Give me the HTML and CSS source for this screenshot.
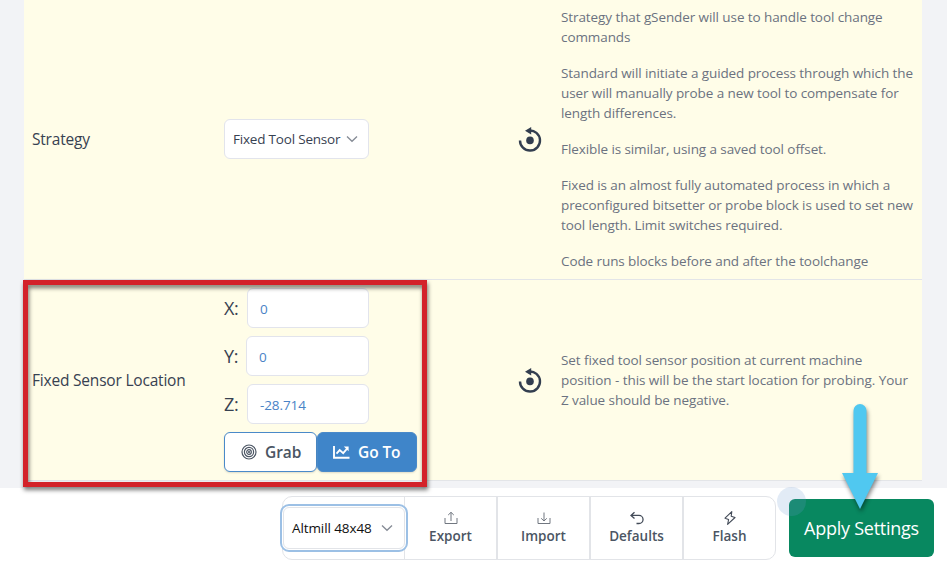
FILE: index.html
```html
<!DOCTYPE html>
<html lang="en">
<head>
<meta charset="utf-8">
<title>Tool change settings</title>
<link rel="stylesheet" href="styles.css">
</head>
<body>
<svg class="sprite" aria-hidden="true">
  <symbol id="reset" viewBox="0 0 24 24"><path d="M11 3.6A10 10 0 1 1 2 13.4" fill="none" stroke="currentColor" stroke-width="2.4"/><path d="M13.2 0v7.6L7 3.8z" fill="currentColor"/><circle cx="12" cy="13.4" r="3.8" fill="currentColor"/></symbol>
  <symbol id="chevron" viewBox="0 0 12 8"><path d="M1 1.5l5 4.8 5-4.8" fill="none" stroke="currentColor" stroke-width="1.3"/></symbol>
</svg>
<main class="panel">
  <section class="row strategy">
    <div class="label">Strategy</div>
    <div class="control"><div class="select"><span>Fixed Tool Sensor</span><svg class="chev"><use href="#chevron"/></svg></div></div>
    <svg class="reset"><use href="#reset"/></svg>
    <div class="desc">
      <p>Strategy that gSender will use to handle tool change<br>commands</p>
      <p>Standard will initiate a guided process through which the<br>user will manually probe a new tool to compensate for<br>length differences.</p>
      <p>Flexible is similar, using a saved tool offset.</p>
      <p>Fixed is an almost fully automated process in which a<br>preconfigured bitsetter or probe block is used to set new<br>tool length. Limit switches required.</p>
      <p>Code runs blocks before and after the toolchange</p>
    </div>
  </section>
  <section class="row location">
    <div class="label wide">Fixed Sensor Location</div>
    <div class="control stack">
      <div class="axis"><span>X:</span><div class="input">0</div></div>
      <div class="axis"><span>Y:</span><div class="input y">0</div></div>
      <div class="axis"><span>Z:</span><div class="input">-28.714</div></div>
      <div class="buttons">
        <div class="btn grab"><svg width="16" height="16" viewBox="0 0 16 16" fill="none" stroke="currentColor" stroke-width="1.2"><circle cx="8" cy="8" r="7"/><circle cx="8" cy="8" r="4.6"/><circle cx="8" cy="8" r="2.3"/><circle cx="8" cy="8" r=".5"/></svg><span>Grab</span></div>
        <div class="btn goto"><svg width="17" height="14" viewBox="0 0 17 14" fill="none" stroke="currentColor" stroke-width="1.9"><path d="M1 1v11.8h15.5M3.5 8.6l3.2-3.5 3.5 3 4-4.6"/><path d="M10.8 1.5H15.6V6.3z" fill="currentColor" stroke="none"/></svg><span>Go To</span></div>
      </div>
    </div>
    <svg class="reset"><use href="#reset"/></svg>
    <div class="desc">
      <p>Set fixed tool sensor position at current machine<br><span class="spread">position - this will be the start location for probing. Your</span><br>Z value should be negative.</p>
    </div>
  </section>
</main>
<footer class="footer">
  <div class="group">
    <div class="profile"><div class="profile-in"><span>Altmill 48x48</span><svg class="chev"><use href="#chevron"/></svg></div></div>
    <div class="action export"><svg width="14" height="14" viewBox="0 0 14 14" fill="none" stroke="currentColor"><path d="M1 7v5.5h12V7M7 10V1.5M4.2 4L7 1.3 9.8 4"/></svg><span>Export</span></div>
    <div class="action"><svg width="14" height="14" viewBox="0 0 14 14" fill="none" stroke="currentColor"><path d="M1 7v5.5h12V7M7 1.5V10M4.2 7.3L7 10l2.8-2.7"/></svg><span>Import</span></div>
    <div class="action"><svg class="dark" width="14" height="14" viewBox="0 0 14 14" fill="none" stroke="currentColor" stroke-width="1.3"><path d="M4.5 1.2L1 4.4l3.5 3.2M1 4.4h8a4 4 0 0 1 0 8.1H6.5"/></svg><span>Defaults</span></div>
    <div class="action"><svg class="dark" width="14" height="14" viewBox="0 0 14 14" fill="none" stroke="currentColor" stroke-width="1.1" stroke-linejoin="round"><path d="M8.8 .6L2 7.2l3.6 1.3L4.6 13.4 12 6.5 8.2 5.2z"/></svg><span>Flash</span></div>
  </div>
  <div class="apply"><span>Apply Settings</span></div>
</footer>
<div class="highlight"></div>
<div class="halo"></div>
<svg class="arrow" width="50" height="120" viewBox="0 0 50 120"><path d="M18.5 16.5a6.5 6.5 0 0 1 13 0V79H43L25 115 7 79h11.5z" fill="#50c8f0"/></svg>
</body>
</html>
```
FILE: styles.css
```css
* { box-sizing: border-box; }
body { margin: 0; width: 947px; height: 568px; overflow: hidden; background: #f2f3f6; font-family: "Open Sans", "Noto Sans", sans-serif; color: #374151; }
.sprite { position: absolute; width: 0; height: 0; }
.panel { width: 898px; height: 488px; margin-left: 24px; }
.row { display: grid; grid-template-columns: 192px 295px 42px 1fr; align-items: center; padding-left: 8px; background: #fffde8; border-bottom: 1px solid #e3e5e8; white-space: nowrap; }
.strategy { height: 280px; padding-bottom: 2px; }
.location { height: 201px; }
.label { font-size: 15.5px; letter-spacing: -.2px; }
.select { width: 145px; height: 40px; display: flex; align-items: center; justify-content: space-between; padding: 0 10px 0 8px; background: #fff; border: 1px solid #e2e4ec; border-radius: 6px; font-size: 13.5px; letter-spacing: -.2px; }
.chev { width: 12px; height: 8px; color: #858b95; flex: none; }
.reset { width: 24px; height: 26px; margin-left: -1px; color: #333e4f; }
.desc { font-size: 13.5px; line-height: 20px; letter-spacing: -.09px; color: #6b7280; }
.desc p { margin: 0 0 16px; }
.desc p:last-child { margin: 0; }
.spread { letter-spacing: -.05px; }
.stack { display: flex; flex-direction: column; gap: 8px; }
.axis { height: 40px; display: flex; align-items: center; justify-content: space-between; width: 145px; font-size: 18px; letter-spacing: -.4px; }
.input { width: 122px; height: 40px; line-height: 40px; padding-left: 12px; border: 1px solid #e2e4ec; border-radius: 6px; background: #fff; color: #4a83c6; font-size: 13.5px; letter-spacing: -.1px; }
.input.y { width: 123px; }
.buttons { display: flex; height: 40px; font-weight: 600; font-size: 15.5px; letter-spacing: -.1px; }
.btn { display: flex; align-items: center; border-radius: 6px; border: 1px solid #4a8ac9; box-shadow: 0 1px 2px #0002; }
.grab { width: 93px; padding-left: 16px; gap: 8px; background: #fff; color: #4b5563; }
.goto { width: 100px; padding-left: 15px; gap: 8px; background: #3f85c9; color: #fff; }
.footer { height: 80px; background: #fff; display: flex; padding: 8px 0 0 282px; }
.group { width: 494px; height: 64px; display: flex; border: 1px solid #e2e4e8; border-radius: 10px; }
.profile { width: 128px; height: 48px; margin: 7px -4px 0 -3px; border: 2px solid #9cc0e5; border-radius: 9px; padding: 1px; background: #fff; z-index: 1; flex: none; }
.profile-in { height: 100%; display: flex; align-items: center; justify-content: space-between; border: 1px solid #e2e4e8; border-radius: 6px; padding: 0 11px 0 8px; font-size: 13.5px; letter-spacing: -.1px; color: #101010; }
.action { flex: 1; display: flex; flex-direction: column; align-items: center; padding-top: 14px; border-left: 2px solid #e2e4e8; color: #4b5563; font-size: 13.5px; font-weight: 600; line-height: 20px; }
.action svg { flex: none; color: #717780; }
.action svg.dark { color: #434b58; }
.export { border-left-width: 1px; }
.action span { margin-top: 1px; }
.apply { width: 145px; height: 58px; margin: 3px 0 0 13px; display: flex; align-items: center; justify-content: center; border-radius: 6px; background: #088860; color: #fff; font-size: 18px; letter-spacing: -.25px; white-space: nowrap; }
.highlight { position: absolute; left: 23px; top: 280px; width: 404px; height: 207px; border: 5px solid #d3222a; filter: drop-shadow(1px 3px 2px #0008); }
.halo { position: absolute; left: 777px; top: 487px; width: 29px; height: 29px; border-radius: 50%; background: #6c9bd333; }
.arrow { position: absolute; left: 835px; top: 394px; filter: drop-shadow(1px 3px 2px #0007); }
```
